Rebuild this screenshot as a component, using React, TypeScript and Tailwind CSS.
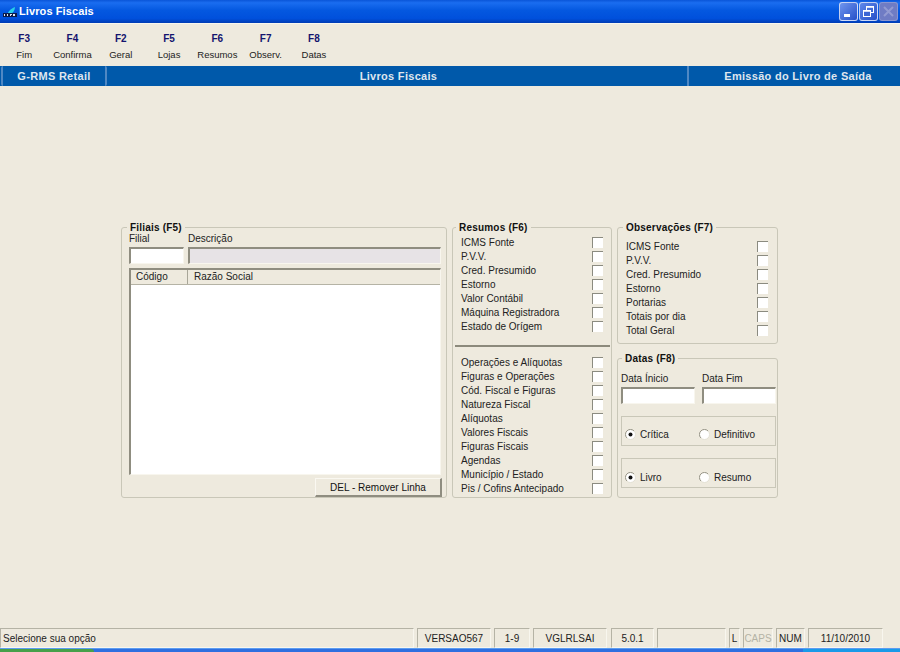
const TOOLBAR = [
  { key: 'F3', label: 'Fim' },
  { key: 'F4', label: 'Confirma' },
  { key: 'F2', label: 'Geral' },
  { key: 'F5', label: 'Lojas' },
  { key: 'F6', label: 'Resumos' },
  { key: 'F7', label: 'Observ.' },
  { key: 'F8', label: 'Datas' },
]

const RESUMOS_A = ['ICMS Fonte', 'P.V.V.', 'Cred. Presumido', 'Estorno', 'Valor Contábil', 'Máquina Registradora', 'Estado de Orígem']
const RESUMOS_B = ['Operações e Alíquotas', 'Figuras e Operações', 'Cód. Fiscal e Figuras', 'Natureza Fiscal', 'Alíquotas', 'Valores Fiscais', 'Figuras Fiscais', 'Agendas', 'Município / Estado', 'Pis / Cofins Antecipado']
const OBSERVACOES = ['ICMS Fonte', 'P.V.V.', 'Cred. Presumido', 'Estorno', 'Portarias', 'Totais por dia', 'Total Geral']

function Group({ title, className, legendClass, children }: { title: string; className: string; legendClass: string; children: React.ReactNode }) {
  return (
    <fieldset className={`border border-[#c9c7b8] rounded-[3px] min-w-0 ${className}`}>
      <legend className={`px-[3px] h-[12px] leading-[14px] text-[10px] font-bold text-[#111] tracking-[0.2px] ${legendClass}`}>{title}</legend>
      {children}
    </fieldset>
  )
}

function SunkenInput({ className }: { className: string }) {
  return <div className={`h-[17px] border-t-2 border-l-2 border-t-[#8f8d80] border-l-[#8f8d80] border-b border-r border-b-[#f8f6ee] border-r-[#f8f6ee] ${className}`} />
}

function CheckRow({ label, boxRight }: { label: string; boxRight: string }) {
  return (
    <div className={`flex items-center justify-between h-[14px] text-[10px] text-[#222] ${boxRight}`}>
      <span>{label}</span>
      <span className="w-[11px] h-[11px] mt-[1px] bg-white border-t border-l border-[#8b8b80]" />
    </div>
  )
}

function Radio({ label, checked, className }: { label: string; checked?: boolean; className: string }) {
  return (
    <div className={`flex items-center gap-[4px] text-[10px] text-[#222] ${className}`}>
      <svg width="11" height="11" viewBox="0 0 11 11">
        <circle cx="5.5" cy="5.5" r="5" fill="#fff" stroke="#e2e0d4" />
        <path d="M1.9 9 A5 5 0 0 1 9 1.9" fill="none" stroke="#9a988b" />
        {checked && <circle cx="5.5" cy="5.5" r="2" fill="#111" />}
      </svg>
      <span>{label}</span>
    </div>
  )
}

function RadioBox({ left, right, className }: { left: string; right: string; className: string }) {
  return (
    <div className={`h-[30px] w-[155px] border border-[#c9c7b8] flex items-center pl-[3px] ${className}`}>
      <Radio label={left} checked className="w-[74px]" />
      <Radio label={right} className="" />
    </div>
  )
}

function StatusPane({ text, className }: { text?: string; className: string }) {
  return (
    <div className={`h-[20px] border-t border-l border-t-[#b5b3a5] border-l-[#b5b3a5] border-r border-b border-r-[#f8f6ee] border-b-[#f8f6ee] flex items-center justify-center text-[10px] text-[#222] shrink-0 ${className}`}>
      {text}
    </div>
  )
}

function WindowButton({ className, children }: { className: string; children: React.ReactNode }) {
  return (
    <div className={`w-[19px] h-[19px] rounded-[3px] border flex items-center justify-center ${className}`}>
      {children}
    </div>
  )
}

export default function App() {
  return (
    <div className="w-[900px] h-[652px] overflow-hidden flex flex-col bg-[#eeeade] font-['Liberation_Sans',Arial,sans-serif]">
      {/* barra de titulo */}
      <div className="h-[23px] shrink-0 flex items-center pl-[2px] pr-[2px] bg-[linear-gradient(to_bottom,#0a55d8_0%,#1a6df0_12%,#0458e0_45%,#0050dc_80%,#003cb4_100%)]">
        <svg width="16" height="16" viewBox="0 0 16 16" className="shrink-0">
          <path d="M5 11 C6 8 8 5 13 3 C13 6 11 9 8 11 Z" fill="#27d0e8" />
          <rect x="1" y="9" width="14" height="4" fill="#0c1c48" />
          <path d="M2 10h1v2h-1zM5 10h1v2h-1zM8 10h2v1h-2zM8 11h1v1h-1zM11 10h2v2h-2z" fill="#dfe8f5" />
        </svg>
        <span className="ml-[1px] text-[11px] font-bold text-white tracking-[0.1px]">Livros Fiscais</span>
        <div className="ml-auto flex gap-[1px] items-center">
          <WindowButton className="border-white/70 bg-[linear-gradient(135deg,#6f95ee,#2650c8)]">
            <span className="w-[6px] h-[3px] bg-white mt-[7px] mr-[3px]" />
          </WindowButton>
          <WindowButton className="border-white/70 bg-[linear-gradient(135deg,#5f88ea,#2650c8)]">
            <svg width="13" height="13" viewBox="0 0 13 13" fill="none" stroke="#fff">
              <rect x="4.5" y="1.5" width="7" height="6" />
              <rect x="1.5" y="5.5" width="7" height="6" fill="#3c66d4" />
              <path d="M4.5 2h7M1.5 6h7" strokeWidth="1.5" />
            </svg>
          </WindowButton>
          <WindowButton className="bg-[#6f7cc4] border-white/20">
            <svg width="13" height="13" viewBox="0 0 13 13" stroke="#929bd2" strokeWidth="2">
              <path d="M2 2 L11 11 M11 2 L2 11" />
            </svg>
          </WindowButton>
        </div>
      </div>

      {/* barra de ferramentas */}
      <div className="h-[43px] shrink-0 border-t border-[#f8f6ee] flex">
        {TOOLBAR.map((b) => (
          <div key={b.key} className="w-[48.3px] flex flex-col items-center">
            <span className="mt-[8px] h-[14px] leading-[14px] text-[10px] font-bold text-[#14146e]">{b.key}</span>
            <span className="mt-[2px] h-[14px] leading-[14px] text-[9.5px] text-[#222]">{b.label}</span>
          </div>
        ))}
      </div>

      {/* faixa azul */}
      <div className="h-[20px] shrink-0 bg-[#0059aa] flex text-[#dfe6ee] text-[11px] font-bold tracking-[0.3px]">
        <div className="w-[106px] ml-[1px] border-x-2 border-[#4f88c4] rounded-[2px] flex items-center justify-center">G-RMS Retail</div>
        <div className="w-[580px] flex items-center justify-center pl-[3px]">Livros Fiscais</div>
        <div className="flex-1 border-l-2 border-[#4f88c4] flex items-center justify-center pl-[7px]">Emissão do Livro de Saída</div>
      </div>

      {/* conteudo */}
      <div className="flex-1 min-h-0 pt-[135px] pl-[121px] flex gap-[5px] items-start">
        <Group title="Filiais (F5)" legendClass="-ml-[2px]" className="w-[326px] h-[277px] px-[7px]">
          <div className="flex gap-[4px]">
            <div className="w-[55px]">
              <div className="h-[12px] leading-[12px] text-[10px] text-[#222]">Filial</div>
              <SunkenInput className="w-[55px] mt-[2px] bg-white" />
            </div>
            <div className="w-[253px]">
              <div className="h-[12px] leading-[12px] text-[10px] text-[#222]">Descrição</div>
              <SunkenInput className="w-[253px] mt-[2px] bg-[#e7e3e6]" />
            </div>
          </div>
          <div className="mt-[4px] w-[312px] h-[207px] flex flex-col bg-white border-t-2 border-l-2 border-t-[#8f8d80] border-l-[#8f8d80] border-r border-b border-r-[#f8f6ee] border-b-[#f8f6ee]">
            <div className="h-[15px] shrink-0 flex bg-[#eeeade] border-b border-[#b5b3a5] text-[10px] text-[#222] leading-[14px]">
              <div className="w-[57px] pl-[5px] border-r border-[#a8a698]">Código</div>
              <div className="pl-[6px]">Razão Social</div>
            </div>
          </div>
          <div className="flex justify-end mt-[3px] -mr-[3px]">
            <div className="w-[127px] h-[19px] bg-[#eeeade] border border-t-[#faf8f1] border-l-[#faf8f1] border-r-2 border-b-2 border-r-[#8f8d80] border-b-[#8f8d80] flex items-center justify-center text-[10px] text-[#111]">DEL - Remover Linha</div>
          </div>
        </Group>

        <Group title="Resumos (F6)" legendClass="ml-[3px]" className="w-[160px] h-[277px]">
          <div className="pl-[8px] pt-[2px]">
            {RESUMOS_A.map((r) => <CheckRow key={r} label={r} boxRight="pr-[8px]" />)}
          </div>
          <div className="mt-[12px] ml-[2px] mr-[1px] border-t-2 border-[#8c8a7c]" />
          <div className="pl-[8px] pt-[8px]">
            {RESUMOS_B.map((r) => <CheckRow key={r} label={r} boxRight="pr-[8px]" />)}
          </div>
        </Group>

        <div className="flex flex-col">
          <Group title="Observações (F7)" legendClass="ml-[5px]" className="w-[161px] h-[123px]">
            <div className="pl-[8px] pt-[6px]">
              {OBSERVACOES.map((o) => <CheckRow key={o} label={o} boxRight="pr-[9px]" />)}
            </div>
          </Group>
          <Group title="Datas (F8)" legendClass="ml-[1px]" className="w-[161px] h-[146px] mt-[8px] pl-[3px]">
            <div className="flex gap-[7px] mt-[9px]">
              <div className="w-[74px]">
                <div className="h-[12px] leading-[12px] text-[10px] text-[#222]">Data Ínicio</div>
                <SunkenInput className="mt-[2px] bg-white" />
              </div>
              <div className="w-[74px]">
                <div className="h-[12px] leading-[12px] text-[10px] text-[#222]">Data Fim</div>
                <SunkenInput className="mt-[2px] bg-white" />
              </div>
            </div>
            <RadioBox left="Crítica" right="Definitivo" className="mt-[12px] pt-[6px]" />
            <RadioBox left="Livro" right="Resumo" className="mt-[12px] pt-[8px]" />
          </Group>
        </div>
      </div>

      {/* barra de status */}
      <div className="h-[20px] shrink-0 flex">
        <StatusPane text="Selecione sua opção" className="w-[414px] !justify-start pl-[2px] text-[#111]" />
        <StatusPane text="VERSAO567" className="w-[74px] ml-[3px]" />
        <StatusPane text="1-9" className="w-[36px] ml-[3px]" />
        <StatusPane text="VGLRLSAI" className="w-[74px] ml-[3px]" />
        <StatusPane text="5.0.1" className="w-[43px] ml-[4px]" />
        <StatusPane className="w-[69px] ml-[3px]" />
        <StatusPane text="L" className="w-[11px] ml-[3px]" />
        <StatusPane text="CAPS" className="w-[30px] ml-[3px] !text-[#b5b3a5]" />
        <StatusPane text="NUM" className="w-[29px] ml-[3px]" />
        <StatusPane text="11/10/2010" className="w-[75px] ml-[3px]" />
      </div>

      {/* barra de tarefas do windows, cortada */}
      <div className="h-[4px] shrink-0 flex bg-[#2f6fe0] border-t border-[#5c9cf0]">
        <div className="w-[94px] bg-[#46a04a] rounded-tr-[4px]" />
        <div className="ml-auto w-[97px] bg-[#1a9ae8]" />
      </div>
    </div>
  )
}
